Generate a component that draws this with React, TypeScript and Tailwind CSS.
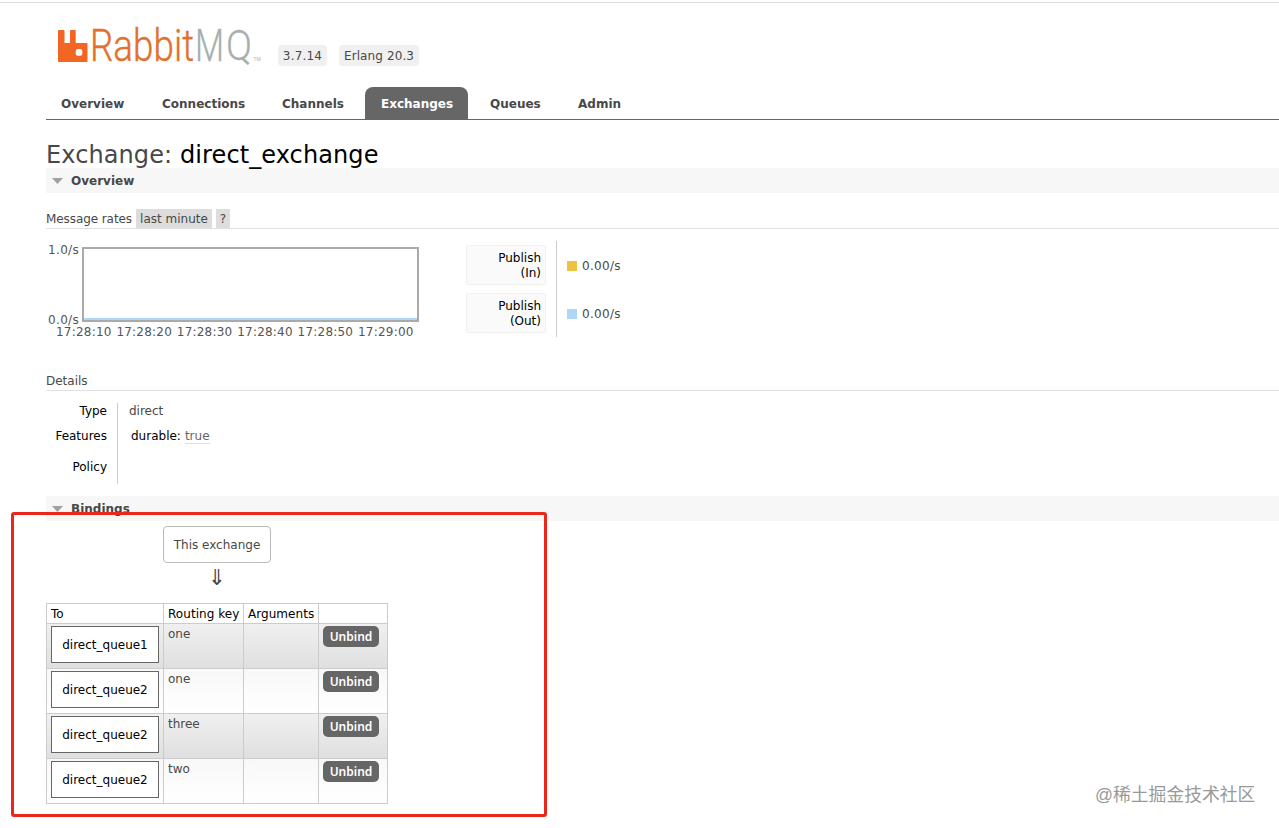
import React from "react";

const tabs = [
  { label: "Overview", cls: "w-[94px] pl-[15px]" },
  { label: "Connections", cls: "w-[120px] pl-[22px]" },
  { label: "Channels", cls: "w-[105px] pl-[22px]" },
  { label: "Exchanges", cls: "w-[103px] pl-4 bg-[#666] text-white rounded-t-lg" },
  { label: "Queues", cls: "w-[88px] pl-[22px]" },
  { label: "Admin", cls: "w-[88px] pl-[22px]" },
];

const times = ["17:28:10", "17:28:20", "17:28:30", "17:28:40", "17:28:50", "17:29:00"];

const rates = [
  { dir: "(In)", color: "bg-[#edc240]" },
  { dir: "(Out)", color: "bg-[#afd8f8]" },
];

const bindings = [
  { to: "direct_queue1", key: "one" },
  { to: "direct_queue2", key: "one" },
  { to: "direct_queue2", key: "three" },
  { to: "direct_queue2", key: "two" },
];

function Logo() {
  return (
    <svg width="216" height="62" viewBox="0 -10 216 62" className="-mt-[10px] -mr-[10px] block shrink-0">
      <path
        fill="#f26522"
        fillRule="evenodd"
        d="M3 5h4.500q1 0 1 1v12H14V6q0-1 1-1h3.700q1 0 1 1v12H30.500q1 0 1 1v17q0 1-1 1H3q-1 0-1-1V6q0-1 1-1zM21.700 24h2.600q2 0 2 2v2.700q0 2-2 2h-2.600q-2 0-2-2V26q0-2 2-2z"
      />
      <g fontFamily="Roboto, sans-serif" fontWeight="300" fontSize="45">
        <text x="34" y="36" textLength="104" lengthAdjust="spacingAndGlyphs" fill="#e2702f" stroke="#e2702f" strokeWidth="0.400">
          Rabbit
        </text>
        <text x="139" y="36" textLength="29" lengthAdjust="spacingAndGlyphs" fill="#a5afae" stroke="#a5afae" strokeWidth="0.300">
          M
        </text>
        <text x="170" y="34.500" fontSize="43" textLength="26" lengthAdjust="spacingAndGlyphs" fill="#a5afae" stroke="#a5afae" strokeWidth="0.300">
          Q
        </text>
      </g>
      <text x="197.500" y="35.500" fontFamily="Roboto, sans-serif" fontSize="5" fill="#b5b5b5">
        TM
      </text>
    </svg>
  );
}

function Section({ title }: { title: string }) {
  return (
    <h2 className="flex h-[25px] items-center bg-[#f7f7f7] pl-[6px] font-bold">
      <svg width="11" height="6" viewBox="0 0 11 6" className="mr-[8px]">
        <path d="M0 0h11L5.500 6z" fill="#a0a0a0" />
      </svg>
      <span className="pt-px">{title}</span>
    </h2>
  );
}

export default function App() {
  return (
    <div className="relative h-[828px] w-[1279px] overflow-hidden bg-white font-['DejaVu_Sans',sans-serif] text-[12px] leading-[15px] whitespace-nowrap text-[#484848]">
      <div className="mt-[2px] h-px bg-[#ddd]" />
      <div className="pl-[46px]">
        <header className="flex h-[84px] items-start pt-[22px] pl-[10px]">
          <Logo />
          <div className="mt-[20px] ml-4 flex gap-3">
            <span className="flex h-[21px] w-[49px] items-center justify-center rounded bg-[#f0f0f0] pt-px tracking-[0.2px]">3.7.14</span>
            <span className="flex h-[21px] w-[80px] items-center justify-center rounded bg-[#f0f0f0] pt-px tracking-[0.1px]">Erlang 20.3</span>
          </div>
        </header>
        <nav className="flex h-[33px] border-b border-[#666] font-bold">
          {tabs.map((t) => (
            <a key={t.label} className={`flex h-8 items-center pt-[2px] ${t.cls}`}>
              {t.label}
            </a>
          ))}
        </nav>

        <h1 className="flex h-12 items-end text-[24px] leading-[26px] tracking-[0.1px]">
          <span>Exchange:&nbsp;</span>
          <span className="text-black">direct_exchange</span>
        </h1>
        <Section title="Overview" />

        <div className="mt-4 flex h-5 gap-1 border-b border-[#e0e0e0] leading-[20px]">
          <span className="w-[86px] tracking-[-0.08px]">Message rates</span>
          <span className="flex w-[76px] justify-center bg-[#ddd]">last minute</span>
          <span className="flex w-[14px] justify-center bg-[#ddd]">?</span>
        </div>

        <div className="flex h-[145px] pt-[12px]">
          <div className="w-[420px]">
            <div className="flex pt-[1px]">
              <div className="flex w-[33px] flex-col justify-between pt-px text-right tracking-[0.3px] text-[#545454]">
                <span>1.0/s</span>
                <span className="-mb-[6px]">0.0/s</span>
              </div>
              <div className="mt-[5px] ml-[3px] flex h-[75px] w-[337px] flex-col justify-end border-2 border-[#aaa]">
                <div className="h-[2px] bg-[#afd8f8]" />
              </div>
            </div>
            <div className="mt-[3px] ml-[10px] flex tracking-[0.22px] text-[#545454]">
              {times.map((t) => (
                <span key={t} className="w-[60.4px]">{t}</span>
              ))}
            </div>
          </div>
          <div className="flex h-[96px] w-[91px] flex-col gap-2 border-r border-[#ccc] pt-1">
            {rates.map((r) => (
              <div key={r.dir} className="h-10 w-[80px] rounded-xs border border-[#f0f0f0] bg-[#fafafa] pt-[5px] pr-[4px] text-right text-black">
                Publish
                <br />
                {r.dir}
              </div>
            ))}
          </div>
          <div className="flex flex-col gap-[32px] pt-[17px] pl-[10px]">
            {rates.map((r) => (
              <div key={r.dir} className="flex h-4 items-center gap-[5px]">
                <i className={`size-[10px] ${r.color}`} />
                <span className="pt-px tracking-[0.3px]">0.00/s</span>
              </div>
            ))}
          </div>
        </div>

        <h3 className="flex h-[17px] border-b border-[#e0e0e0]">Details</h3>
        <div className="mt-3 flex h-[81px]">
          <div className="w-[72px] border-r border-[#ccc] pt-px pr-[10px] text-right text-black">
            <div className="h-[25px]">Type</div>
            <div className="h-[31px]">Features</div>
            <div>Policy</div>
          </div>
          <div className="pt-px pl-[11px]">
            <div className="h-[25px]">direct</div>
            <div className="flex gap-1 pl-[2px]">
              <span className="text-black">durable:</span>
              <span className="h-[15px] border-b border-[#ddd] text-[#666]">true</span>
            </div>
          </div>
        </div>

        <div className="mt-3">
          <Section title="Bindings" />
        </div>

        <div className="mt-[5px] flex w-[342px] flex-col items-center">
          <div className="flex h-[37px] w-[108px] items-center justify-center rounded border border-[#bbb] pt-px">This exchange</div>
          <div className="flex h-10 items-center pb-[12px] text-[22px]">⇓</div>
        </div>

        <div className="w-[342px] border-t border-l border-[#ccc]">
          <div className="grid h-5 grid-cols-[117px_80px_75px_69px] text-black">
            {["To", "Routing key", "Arguments", ""].map((h) => (
              <div key={h} className="border-r border-b border-[#ccc] pt-[3px] pl-1 tracking-[0.05px]">{h}</div>
            ))}
          </div>
          {bindings.map((b, i) => (
            <div
              key={i}
              className={`grid h-[45px] grid-cols-[117px_80px_75px_69px] bg-linear-to-b ${i % 2 ? "from-[#f8f8f8] to-white" : "from-[#f0f0f0] to-[#dfdfdf]"}`}
            >
              <div className="border-r border-b border-[#ccc] pt-[2px] pl-1">
                <div className="flex h-[37px] w-[108px] items-center justify-center border border-[#666] bg-white pt-px text-black">{b.to}</div>
              </div>
              <div className="border-r border-b border-[#ccc] pt-[3px] pl-1">{b.key}</div>
              <div className="border-r border-b border-[#ccc]" />
              <div className="border-r border-b border-[#ccc] pt-[2px] pl-1">
                <button className="flex h-[21px] w-[56px] items-center justify-center rounded-[5px] bg-[#666] font-['Noto_Sans',sans-serif] text-[12px] font-semibold text-white">Unbind</button>
              </div>
            </div>
          ))}
        </div>
      </div>
      <div className="absolute top-[512px] left-[11px] h-[305px] w-[536px] rounded-[3px] border-3 border-[#e8281c]" />
      <div className="absolute top-[783px] left-[1095px] font-['Liberation_Sans','Noto_Sans_CJK_SC',sans-serif] text-[17.800px] leading-6 text-[#999]">@稀土掘金技术社区</div>
    </div>
  );
}
